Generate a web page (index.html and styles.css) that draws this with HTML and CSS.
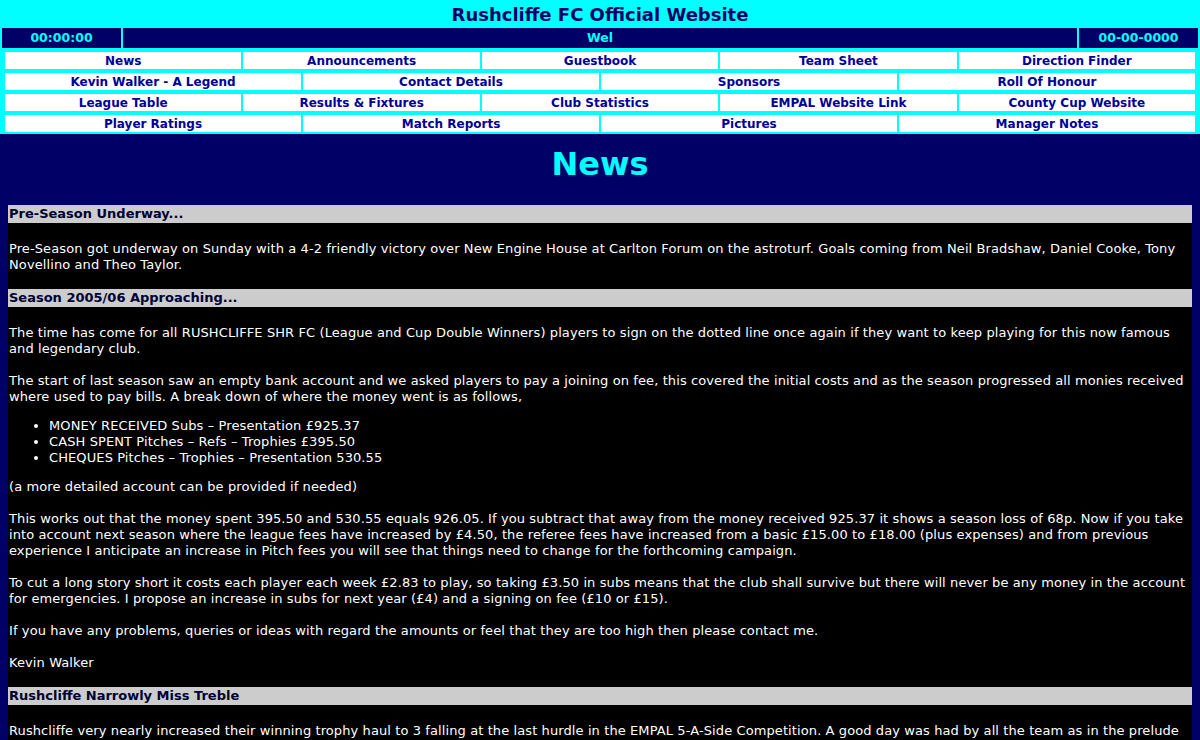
FILE: index.html
```html
<!DOCTYPE html>
<html>
<head>
<meta charset="utf-8">
<title>Rushcliffe FC Official Website</title>
<link rel="stylesheet" href="styles.css">
</head>
<body>
<div class="top">
  <div class="site-title">Rushcliffe FC Official Website</div>
  <div class="info-bar">
    <div class="info-cell info-time">00:00:00</div>
    <div class="info-cell info-msg">Wel</div>
    <div class="info-cell info-date">00-00-0000</div>
  </div>
  <nav class="nav">
    <div class="nav-row">
      <a class="nav-cell" href="#">News</a>
      <a class="nav-cell" href="#">Announcements</a>
      <a class="nav-cell" href="#">Guestbook</a>
      <a class="nav-cell" href="#">Team Sheet</a>
      <a class="nav-cell" href="#">Direction Finder</a>
    </div>
    <div class="nav-row">
      <a class="nav-cell" href="#">Kevin Walker - A Legend</a>
      <a class="nav-cell" href="#">Contact Details</a>
      <a class="nav-cell" href="#">Sponsors</a>
      <a class="nav-cell" href="#">Roll Of Honour</a>
    </div>
    <div class="nav-row">
      <a class="nav-cell" href="#">League Table</a>
      <a class="nav-cell" href="#">Results &amp; Fixtures</a>
      <a class="nav-cell" href="#">Club Statistics</a>
      <a class="nav-cell" href="#">EMPAL Website Link</a>
      <a class="nav-cell" href="#">County Cup Website</a>
    </div>
    <div class="nav-row">
      <a class="nav-cell" href="#">Player Ratings</a>
      <a class="nav-cell" href="#">Match Reports</a>
      <a class="nav-cell" href="#">Pictures</a>
      <a class="nav-cell" href="#">Manager Notes</a>
    </div>
  </nav>
</div>

<main class="main">
  <h1 class="page-title">News</h1>
  <div class="content">
    <h2 class="item-head">Pre-Season Underway...</h2>
    <p>Pre-Season got underway on Sunday with a 4-2 friendly victory over New Engine House at Carlton Forum on the astroturf. Goals coming from Neil Bradshaw, Daniel Cooke, Tony Novellino and Theo Taylor.</p>

    <h2 class="item-head">Season 2005/06 Approaching...</h2>
    <p>The time has come for all RUSHCLIFFE SHR FC (League and Cup Double Winners) players to sign on the dotted line once again if they want to keep playing for this now famous and legendary club.</p>
    <p>The start of last season saw an empty bank account and we asked players to pay a joining on fee, this covered the initial costs and as the season progressed all monies received where used to pay bills. A break down of where the money went is as follows,</p>
    <ul>
      <li>MONEY RECEIVED Subs – Presentation £925.37</li>
      <li>CASH SPENT Pitches – Refs – Trophies £395.50</li>
      <li>CHEQUES Pitches – Trophies – Presentation 530.55</li>
    </ul>
    <p>(a more detailed account can be provided if needed)</p>
    <p>This works out that the money spent 395.50 and 530.55 equals 926.05. If you subtract that away from the money received 925.37 it shows a season loss of 68p. Now if you take into account next season where the league fees have increased by £4.50, the referee fees have increased from a basic £15.00 to £18.00 (plus expenses) and from previous experience I anticipate an increase in Pitch fees you will see that things need to change for the forthcoming campaign.</p>
    <p>To cut a long story short it costs each player each week £2.83 to play, so taking £3.50 in subs means that the club shall survive but there will never be any money in the account for emergencies. I propose an increase in subs for next year (£4) and a signing on fee (£10 or £15).</p>
    <p>If you have any problems, queries or ideas with regard the amounts or feel that they are too high then please contact me.</p>
    <p>Kevin Walker</p>

    <h2 class="item-head">Rushcliffe Narrowly Miss Treble</h2>
    <p>Rushcliffe very nearly increased their winning trophy haul to 3 falling at the last hurdle in the EMPAL 5-A-Side Competition. A good day was had by all the team as in the prelude to the final.</p>
  </div>
</main>
</body>
</html>
```

FILE: styles.css
```css
html, body {
  margin: 0;
  padding: 0;
}

body {
  background: #000066;
  font-family: "DejaVu Sans", Verdana, sans-serif;
  font-size: 12px;
}

.top {
  background: #00ffff;
  padding-bottom: 2px;
}

.site-title {
  height: 28px;
  line-height: 29px;
  text-align: center;
  font-size: 18px;
  font-weight: bold;
  color: #000066;
}

.info-bar {
  display: flex;
  gap: 2px;
  padding: 0 2px;
  height: 20px;
}

.info-cell {
  background: #000066;
  color: #00ffff;
  font-weight: bold;
  font-size: 12.5px;
  line-height: 20px;
  text-align: center;
}

.info-time,
.info-date {
  width: 119px;
}

.info-msg {
  flex: 1;
}

.nav {
  display: flex;
  flex-direction: column;
  gap: 4px;
  padding: 4px 5px 0 5px;
}

.nav-row {
  display: flex;
  gap: 2px;
}

.nav-cell {
  flex: 1;
  background: #ffffff;
  height: 17px;
  line-height: 18px;
  text-align: center;
  color: #000099;
  font-weight: bold;
  font-size: 12px;
  text-decoration: none;
}

.main {
  padding: 0 8px;
}

.page-title {
  margin: 0;
  height: 71px;
  line-height: 60px;
  text-align: center;
  font-size: 32px;
  font-weight: bold;
  color: #00ffff;
}

.content {
  background: #000000;
  color: #ffffff;
  font-size: 13px;
  letter-spacing: 0.1px;
  line-height: 16px;
  padding-bottom: 16px;
}

.item-head {
  margin: 0;
  background: #cccccc;
  color: #000033;
  font-size: 13px;
  letter-spacing: 0;
  font-weight: bold;
  height: 18px;
  line-height: 18px;
  padding-left: 1px;
}

.content p {
  margin: 0 0 16px 0;
  padding-left: 1px;
}

.content .item-head + p {
  margin-top: 18px;
}

.content ul {
  margin: -3px 0 13px 0;
  padding-left: 41px;
}
```
